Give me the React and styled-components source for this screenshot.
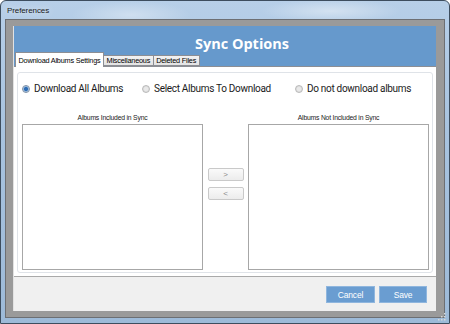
import React, { useState } from 'react';
import styled, { createGlobalStyle } from 'styled-components';

const GlobalStyle = createGlobalStyle`
  html, body {
    margin: 0;
    padding: 0;
    width: 450px;
    height: 324px;
    overflow: hidden;
    background: #ffffff;
  }
  * { box-sizing: border-box; }
`;

const Window = styled.div`
  width: 450px;
  height: 324px;
  display: flex;
  flex-direction: column;
  padding: 0 4px 5px 4px;
  border: 1px solid #3d4d5e;
  border-radius: 6px 6px 0 0;
  background:
    radial-gradient(ellipse 60px 14px at 130px 14px, rgba(255,255,255,0.35), transparent),
    radial-gradient(ellipse 70px 12px at 330px 10px, rgba(255,255,255,0.4), transparent),
    linear-gradient(180deg, #b7cfe8 0%, #a8c3df 40%, #9dbad8 100%);
  font-family: "Liberation Sans", Arial, sans-serif;
`;

const TitleBar = styled.div`
  height: 18px;
  display: flex;
  align-items: center;
  padding-left: 2px;
  font-size: 8px;
  letter-spacing: -0.1px;
  color: #1a1a1a;
  text-shadow: 0 0 6px rgba(255,255,255,0.9);
`;

const Client = styled.div`
  flex: 1;
  display: flex;
  background: #9a9a9a;
  border: 1px solid #6d6f73;
  padding: 6px 8px 6px 7px;
  position: relative;
`;

const Content = styled.div`
  flex: 1;
  display: flex;
  flex-direction: column;
  background: #ffffff;
  border-left: 1px solid #e2e2e2;
`;

const Header = styled.div`
  background: #6699cc;
  display: flex;
  flex-direction: column;
`;

const Heading = styled.h1`
  margin: 0;
  height: 26px;
  display: flex;
  align-items: center;
  justify-content: center;
  padding: 9px 0 0 34px;
  font-family: "Open Sans", "Liberation Sans", sans-serif;
  font-weight: 700;
  font-size: 14.5px;
  color: #ffffff;
`;

const TabRow = styled.div`
  height: 14px;
  display: flex;
  align-items: flex-end;
  padding-left: 1px;
`;

const Tab = styled.button`
  all: unset;
  box-sizing: border-box;
  height: ${p => (p.$active ? '15px' : '11px')};
  margin-bottom: ${p => (p.$active ? '-1px' : '0')};
  padding: 0 2.5px;
  display: flex;
  align-items: center;
  font-family: "Liberation Sans", Arial, sans-serif;
  font-size: 7.3px;
  letter-spacing: -0.2px;
  color: #000;
  background: ${p => (p.$active ? '#ffffff' : 'linear-gradient(180deg, #f2f2f2, #e3e3e3)')};
  border: 1px solid #8c8e94;
  border-bottom: ${p => (p.$active ? 'none' : '1px solid #8c8e94')};
  margin-left: ${p => (p.$first ? '0' : '-1px')};
  position: relative;
  z-index: ${p => (p.$active ? 2 : 1)};
`;

const TabPanel = styled.div`
  flex: 1;
  display: flex;
  padding: 5px 3px 3px 3px;
  background: #ffffff;
  border-top: 1px solid #8c8e94;
  border-bottom: 1px solid #a9a9a9;
`;

const GroupBox = styled.div`
  flex: 1;
  display: flex;
  flex-direction: column;
  border: 1px solid #dfe3e8;
  border-radius: 3px;
  padding: 8px 3px 2px 3px;
`;

const RadioRow = styled.div`
  display: flex;
  height: 15px;
  align-items: center;
  padding-left: 1px;
`;

const RadioItem = styled.label`
  display: flex;
  align-items: center;
  gap: 4px;
  width: ${p => p.$w}px;
  white-space: nowrap;
  font-family: "Roboto", "Liberation Sans", sans-serif;
  font-size: 10px;
  letter-spacing: -0.3px;
  color: #1a1a1a;
  cursor: pointer;
`;

const RadioDot = styled.span`
  width: 8px;
  height: 8px;
  border-radius: 50%;
  border: 1px solid ${p => (p.$checked ? '#7d8ea3' : '#b9b9b9')};
  background: ${p =>
    p.$checked
      ? 'radial-gradient(circle, #2f6db5 0 1.6px, #8fb5dc 2.4px, #e6eef7 3.5px)'
      : 'radial-gradient(circle, #e9e9e9 0 1.5px, #d8d8d8 3.5px)'};
  flex: none;
`;

const Lists = styled.div`
  flex: 1;
  display: grid;
  grid-template-columns: 181px 45px 181px;
  margin-top: 18px;
  padding-left: 1px;
`;

const ListColumn = styled.div`
  display: flex;
  flex-direction: column;
`;

const ListLabel = styled.div`
  height: 9px;
  text-align: center;
  font-family: "Liberation Sans", Arial, sans-serif;
  font-size: 6.8px;
  letter-spacing: -0.2px;
  color: #222;
  margin-bottom: 1px;
`;

const ListBox = styled.div`
  flex: 1;
  background: #ffffff;
  border: 1px solid #a7a7a7;
`;

const MoveButtons = styled.div`
  display: flex;
  flex-direction: column;
  align-items: center;
  gap: 6px;
  padding-top: 54px;
`;

const MoveButton = styled.button`
  width: 36px;
  height: 13px;
  padding: 0;
  border: 1px solid #c9c9c9;
  border-radius: 2px;
  background: linear-gradient(180deg, #fafafa, #ececec);
  font-family: "Liberation Sans", Arial, sans-serif;
  font-size: 8px;
  line-height: 11px;
  color: #8a8a8a;
`;

const Footer = styled.div`
  height: 34px;
  flex: none;
  display: flex;
  justify-content: flex-end;
  align-items: flex-start;
  gap: 4px;
  padding: 9px 9px 0 0;
  background: #f0f0f0;
`;

const ActionButton = styled.button`
  width: ${p => p.$w}px;
  height: 17px;
  padding: 0;
  border: 1px solid #8fb6de;
  background: #6a9dd1;
  color: #ffffff;
  font-family: "Liberation Sans", Arial, sans-serif;
  font-size: 8.5px;
  letter-spacing: -0.2px;
`;

const Grip = styled.svg`
  position: absolute;
  right: -2px;
  bottom: -4px;
`;

const options = [
  { id: 'all', label: 'Download All Albums', w: 120 },
  { id: 'select', label: 'Select Albums To Download', w: 153 },
  { id: 'none', label: 'Do not download albums', w: 130 },
];

const tabs = ['Download Albums Settings', 'Miscellaneous', 'Deleted Files'];

export default function App() {
  const [mode, setMode] = useState('all');
  const [tab, setTab] = useState(0);

  return (
    <>
      <GlobalStyle />
      <Window>
        <TitleBar>Preferences</TitleBar>
        <Client>
          <Content>
            <Header>
              <Heading>Sync Options</Heading>
              <TabRow>
                {tabs.map((t, i) => (
                  <Tab key={t} $first={i === 0} $active={tab === i} onClick={() => setTab(i)}>
                    {t}
                  </Tab>
                ))}
              </TabRow>
            </Header>
            <TabPanel>
              <GroupBox>
                <RadioRow>
                  {options.map(o => (
                    <RadioItem key={o.id} $w={o.w} onClick={() => setMode(o.id)}>
                      <RadioDot $checked={mode === o.id} />
                      {o.label}
                    </RadioItem>
                  ))}
                </RadioRow>
                <Lists>
                  <ListColumn>
                    <ListLabel>Albums Included in Sync</ListLabel>
                    <ListBox />
                  </ListColumn>
                  <MoveButtons>
                    <MoveButton>&gt;</MoveButton>
                    <MoveButton>&lt;</MoveButton>
                  </MoveButtons>
                  <ListColumn>
                    <ListLabel>Albums Not Included in Sync</ListLabel>
                    <ListBox />
                  </ListColumn>
                </Lists>
              </GroupBox>
            </TabPanel>
            <Footer>
              <ActionButton $w={49}>Cancel</ActionButton>
              <ActionButton $w={48}>Save</ActionButton>
            </Footer>
          </Content>
          <Grip width="8" height="8" viewBox="0 0 8 8">
            <g fill="#d8d8d8">
              <rect x="6" y="0" width="1.5" height="1.5" />
              <rect x="3" y="3" width="1.5" height="1.5" />
              <rect x="6" y="3" width="1.5" height="1.5" />
              <rect x="0" y="6" width="1.5" height="1.5" />
              <rect x="3" y="6" width="1.5" height="1.5" />
              <rect x="6" y="6" width="1.5" height="1.5" />
            </g>
          </Grip>
        </Client>
      </Window>
    </>
  );
}
